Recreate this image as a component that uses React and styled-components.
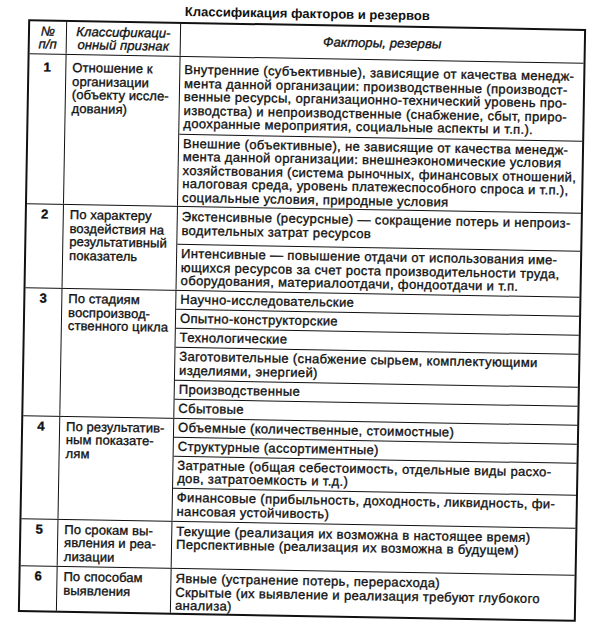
import React from "react";
import styled, { createGlobalStyle } from "styled-components";

const GlobalStyle = createGlobalStyle`
  html, body {
    margin: 0;
    padding: 0;
    background: #fff;
  }
  body {
    font-family: "Liberation Sans", Arial, sans-serif;
    color: #111;
  }
`;

const Frame = styled.div`
  width: 592px;
  height: 623px;
  overflow: hidden;
`;

// the scan is turned about one degree clockwise
const Sheet = styled.div`
  padding-top: 6px;
  transform: rotate(1deg);
  transform-origin: 302px 320px;
`;

const Title = styled.h1`
  margin: 0 0 0 23px;
  width: 558px;
  height: 18px;
  font-size: 13px;
  font-weight: 700;
  text-align: center;
  line-height: 16px;
`;

const Table = styled.div`
  margin-left: 23px;
  width: 558px;
  border: 2px solid #111;
  box-sizing: border-box;
  font-size: 13px;
  line-height: 13.5px;
  letter-spacing: 0.35px;
  -webkit-text-stroke: 0.35px #111;
`;

const Row = styled.div`
  display: grid;
  grid-template-columns: 36px 114px 1fr;
  min-height: ${(p) => p.$h || 0}px;
  & + & {
    border-top: 1.5px solid #111;
  }
`;

const HeadCell = styled.div`
  display: flex;
  align-items: center;
  justify-content: center;
  text-align: center;
  font-style: italic;
  white-space: nowrap;
  letter-spacing: 0.1px;
  ${(p) => p.$ruled && "border-left: 1.5px solid #111;"}
`;

const Num = styled.div`
  text-align: center;
  padding-top: ${(p) => p.$pt}px;
  font-weight: 700;
`;

const Sign = styled.div`
  border-left: 1.5px solid #111;
  padding: ${(p) => p.$pt}px 2px 3px 6px;
  white-space: nowrap;
  letter-spacing: 0.1px;
`;

const Factors = styled.div`
  border-left: 1.5px solid #111;
  display: flex;
  flex-direction: column;
`;

const Item = styled.div`
  padding: ${(p) => p.$top}px 4px ${(p) => p.$bottom}px 4px;
  white-space: nowrap;
  & + & {
    border-top: 1px solid #111;
  }
`;

const lines = (arr) =>
  arr.map((t, i) => (
    <React.Fragment key={i}>
      {i > 0 && <br />}
      {t}
    </React.Fragment>
  ));

const rows = [
  {
    n: "1",
    pt: 6,
    sign: ["Отношение к", "организации", "(объекту иссле-", "дования)"],
    items: [
      {
        top: 6,
        bottom: 3,
        text: [
          "Внутренние (субъективные), зависящие от качества менедж-",
          "мента данной организации: производственные (производст-",
          "венные ресурсы, организационно-технический уровень про-",
          "изводства) и непроизводственные (снабжение, сбыт, приро-",
          "доохранные мероприятия, социальные аспекты и т.п.).",
        ],
      },
      {
        top: 2,
        bottom: 2,
        text: [
          "Внешние (объективные), не зависящие от качества менедж-",
          "мента данной организации: внешнеэкономические условия",
          "хозяйствования (система рыночных, финансовых отношений,",
          "налоговая среда, уровень платежеспособного спроса и т.п.),",
          "социальные условия, природные условия",
        ],
      },
    ],
  },
  {
    n: "2",
    sign: ["По характеру", "воздействия на", "результативный", "показатель"],
    items: [
      {
        top: 3,
        bottom: 7,
        text: [
          "Экстенсивные (ресурсные) — сокращение потерь и непроиз-",
          "водительных затрат ресурсов",
        ],
      },
      [
        "Интенсивные — повышение отдачи от использования име-",
        "ющихся ресурсов за счет роста производительности труда,",
        "оборудования, материалоотдачи, фондоотдачи и т.п.",
      ],
    ],
  },
  {
    n: "3",
    sign: ["По стадиям", "воспроизвод-", "ственного цикла"],
    items: [
      ["Научно-исследовательские"],
      ["Опытно-конструкторские"],
      ["Технологические"],
      ["Заготовительные (снабжение сырьем, комплектующими", "изделиями, энергией)"],
      ["Производственные"],
      ["Сбытовые"],
    ],
  },
  {
    n: "4",
    sign: ["По результатив-", "ным показате-", "лям"],
    items: [
      ["Объемные (количественные, стоимостные)"],
      ["Структурные (ассортиментные)"],
      [
        "Затратные (общая себестоимость, отдельные виды расхо-",
        "дов, затратоемкость и т.д.)",
      ],
      [
        "Финансовые (прибыльность, доходность, ликвидность, фи-",
        "нансовая устойчивость)",
      ],
    ],
  },
  {
    n: "5",
    sign: ["По срокам вы-", "явления и реа-", "лизации"],
    items: [
      {
        top: 3,
        bottom: 2,
        text: [
          "Текущие (реализация их возможна в настоящее время)",
          "Перспективные (реализация их возможна в будущем)",
        ],
      },
    ],
  },
  {
    n: "6",
    sign: ["По способам", "выявления"],
    items: [
      {
        top: 3,
        bottom: 0,
        text: [
          "Явные (устранение потерь, перерасхода)",
          "Скрытые (их выявление и реализация требуют глубокого",
          "анализа)",
        ],
      },
    ],
  },
];

export default function App() {
  return (
    <Frame>
      <GlobalStyle />
      <Sheet>
        <Title>Классификация факторов и резервов</Title>
        <Table>
          <Row $h={32}>
            <HeadCell>
              <div>
                №
                <br />
                п/п
              </div>
            </HeadCell>
            <HeadCell $ruled>
              <div>
                Классификаци-
                <br />
                онный признак
              </div>
            </HeadCell>
            <HeadCell $ruled>Факторы, резервы</HeadCell>
          </Row>
          {rows.map((r) => (
            <Row key={r.n}>
              <Num $pt={r.pt ?? 3}>{r.n}</Num>
              <Sign $pt={r.pt ?? 3}>{lines(r.sign)}</Sign>
              <Factors>
                {r.items.map((it, i) =>
                  Array.isArray(it) ? (
                    <Item key={i} $top={2} $bottom={2.5}>
                      {lines(it)}
                    </Item>
                  ) : (
                    <Item key={i} $top={it.top} $bottom={it.bottom}>
                      {lines(it.text)}
                    </Item>
                  )
                )}
              </Factors>
            </Row>
          ))}
        </Table>
      </Sheet>
    </Frame>
  );
}
